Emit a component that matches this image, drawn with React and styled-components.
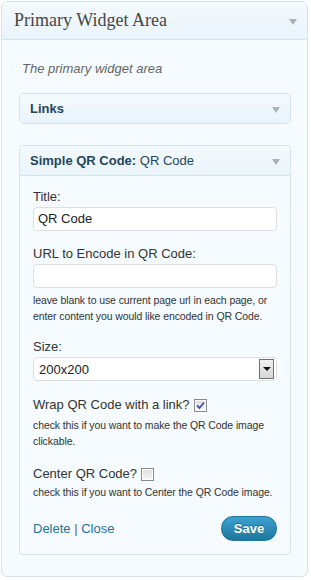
import styled, { createGlobalStyle } from "styled-components";

const GlobalStyle = createGlobalStyle`
  body {
    margin: 0;
    background: #ffffff;
    font-family: "Liberation Sans", Arial, sans-serif;
    color: #333333;
  }
`;

const Sidebar = styled.div`
  margin: 1px;
  width: 307px;
  height: 576px;
  box-sizing: border-box;
  border: 1px solid #d5e4ed;
  border-radius: 6px;
  background: #f5fbfe;
  overflow: hidden;
`;

const SidebarHeader = styled.div`
  height: 37px;
  display: flex;
  align-items: center;
  justify-content: space-between;
  padding: 0 10px 0 12px;
  border-bottom: 1px solid #d5e4ed;
  background: linear-gradient(#f4fafd, #e9f4fa);
`;

const SidebarTitle = styled.h3`
  margin: 0;
  font-family: "Liberation Serif", Georgia, serif;
  font-size: 18px;
  font-weight: normal;
  color: #464646;
`;

const Arrow = styled.span`
  width: 0;
  height: 0;
  border-left: 4px solid transparent;
  border-right: 4px solid transparent;
  border-top: 6px solid #a9b3b9;
  margin-top: 2px;
`;

const Description = styled.p`
  margin: 20px 0 0 20px;
  font-size: 13px;
  line-height: 18px;
  font-style: italic;
  color: #666666;
`;

const Widgets = styled.div`
  display: flex;
  flex-direction: column;
  gap: 21px;
  margin: 15px 16px 0 17px;
`;

const Widget = styled.div`
  border: 1px solid #d5e4ed;
  border-radius: 4px;
  background: #f5fbfe;
`;

const WidgetHeader = styled.div`
  height: 29px;
  display: flex;
  align-items: center;
  justify-content: space-between;
  padding: 0 10px 0 10px;
  background: linear-gradient(#f4fafd, #e9f4fa);
  border-bottom: ${(p) => (p.$open ? "1px solid #d5e4ed" : "none")};
  border-radius: 4px 4px 0 0;
`;

const WidgetTitle = styled.h4`
  margin: 0;
  font-size: 13px;
  font-weight: bold;
  color: #23465c;
  span {
    font-weight: normal;
  }
`;

const WidgetBody = styled.div`
  padding: 12px 13px 13px;
`;

const Field = styled.div`
  margin-bottom: ${(p) => p.$gap ?? 14}px;
`;

const Label = styled.div`
  display: flex;
  align-items: center;
  gap: 4px;
  font-size: 13px;
  line-height: 18px;
  margin-bottom: 1px;
  color: #333333;
`;

const TextInput = styled.div`
  height: 22px;
  border: 1px solid #dfdfdf;
  border-radius: 4px;
  background: #ffffff;
  padding: 0 4px;
  font-size: 13px;
  line-height: 22px;
  color: #222222;
`;

const Help = styled.div`
  margin-top: ${(p) => p.$top ?? 3}px;
  font-size: 10.5px;
  letter-spacing: -0.1px;
  line-height: 16px;
  color: #333333;
`;

const Select = styled.div`
  height: 22px;
  display: flex;
  align-items: center;
  justify-content: space-between;
  border: 1px solid #dfdfdf;
  border-radius: 4px;
  background: #ffffff;
  padding: 0 2px 0 5px;
  font-size: 13px;
  color: #222222;
`;

const SelectButton = styled.span`
  width: 13px;
  height: 18px;
  border: 1px solid #707070;
  background: linear-gradient(#f2f2f2, #d6d6d6);
  display: flex;
  align-items: center;
  justify-content: center;
  &::after {
    content: "";
    border-left: 4px solid transparent;
    border-right: 4px solid transparent;
    border-top: 4px solid #111111;
  }
`;

const Box = styled.span`
  width: 11px;
  height: 11px;
  border: 1px solid #8a8a8a;
  background: linear-gradient(#dcdcdc, #f8f8f8);
  display: inline-flex;
  align-items: center;
  justify-content: center;
  box-shadow: inset 0 0 0 1px #ffffff;
`;

function Checkbox({ checked }) {
  return (
    <Box>
      {checked && (
        <svg width="9" height="9" viewBox="0 0 9 9">
          <path d="M1 4.5 L3.5 7 L8 1.5" fill="none" stroke="#3a4fa8" strokeWidth="1.8" />
        </svg>
      )}
    </Box>
  );
}

const Footer = styled.div`
  display: flex;
  align-items: center;
  justify-content: space-between;
  margin-top: 16px;
  font-size: 13px;
  color: #666666;
`;

const Link = styled.a`
  color: #21759b;
  text-decoration: none;
`;

const SaveButton = styled.button`
  width: 56px;
  height: 25px;
  border: 1px solid #21759b;
  border-radius: 12px;
  background: linear-gradient(#3aa2d1, #21759b);
  color: #ffffff;
  font-family: "Liberation Sans", Arial, sans-serif;
  font-size: 13px;
  font-weight: bold;
  text-shadow: 0 -1px 0 rgba(0, 0, 0, 0.3);
  padding: 0;
`;

export default function App() {
  return (
    <>
      <GlobalStyle />
      <Sidebar>
        <SidebarHeader>
          <SidebarTitle>Primary Widget Area</SidebarTitle>
          <Arrow />
        </SidebarHeader>
        <Description>The primary widget area</Description>
        <Widgets>
          <Widget>
            <WidgetHeader>
              <WidgetTitle>Links</WidgetTitle>
              <Arrow />
            </WidgetHeader>
          </Widget>
          <Widget>
            <WidgetHeader $open>
              <WidgetTitle>
                Simple QR Code: <span>QR Code</span>
              </WidgetTitle>
              <Arrow />
            </WidgetHeader>
            <WidgetBody>
              <Field>
                <Label>Title:</Label>
                <TextInput>QR Code</TextInput>
              </Field>
              <Field>
                <Label>URL to Encode in QR Code:</Label>
                <TextInput />
                <Help $top={4}>
                  leave blank to use current page url in each page, or enter
                  content you would like encoded in QR Code.
                </Help>
              </Field>
              <Field $gap={15}>
                <Label>Size:</Label>
                <Select>
                  200x200
                  <SelectButton />
                </Select>
              </Field>
              <Field $gap={16}>
                <Label>
                  Wrap QR Code with a link? <Checkbox checked />
                </Label>
                <Help>
                  check this if you want to make the QR Code image clickable.
                </Help>
              </Field>
              <Field $gap={0}>
                <Label>
                  Center QR Code? <Checkbox />
                </Label>
                <Help $top={1}>
                  check this if you want to Center the QR Code image.
                </Help>
              </Field>
              <Footer>
                <span>
                  <Link href="#">Delete</Link> | <Link href="#">Close</Link>
                </span>
                <SaveButton>Save</SaveButton>
              </Footer>
            </WidgetBody>
          </Widget>
        </Widgets>
      </Sidebar>
    </>
  );
}
